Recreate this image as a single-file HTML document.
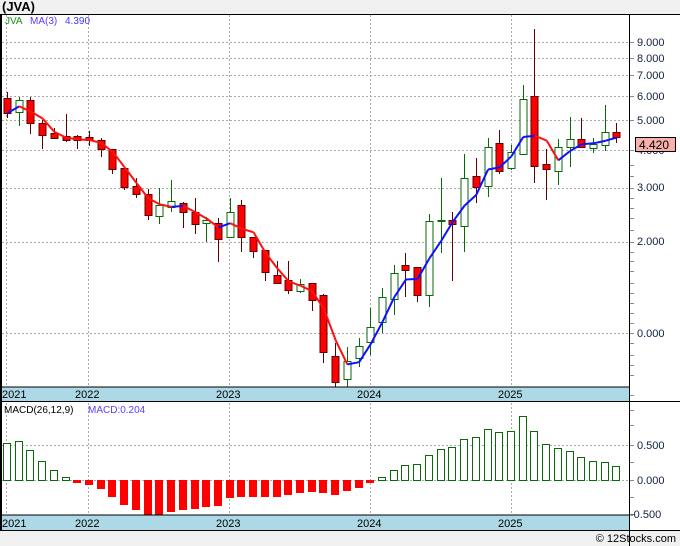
<!DOCTYPE html>
<html><head><meta charset="utf-8"><style>
html,body{margin:0;padding:0;background:#f0f0f0;}
body{width:680px;height:546px;overflow:hidden;position:relative;font-family:"Liberation Sans",sans-serif;}
svg{position:absolute;left:0;top:0;}
</style></head><body>
<svg id="s" width="680" height="546" xmlns="http://www.w3.org/2000/svg" font-family="Liberation Sans, sans-serif">
<rect x="0" y="14" width="680" height="516" fill="#fff"/>
<text x="2" y="11" font-size="13" font-weight="bold" fill="#000">(JVA)</text>
<g id="g"></g>
<rect x="1" y="387" width="628" height="14" fill="#add8e6"/>
<rect x="1" y="515" width="628" height="15" fill="#add8e6"/>
<g font-size="11" fill="#000">
<text x="2" y="398">2021</text><text x="75" y="398">2022</text><text x="216" y="398">2023</text><text x="357" y="398">2024</text><text x="498" y="398">2025</text>
<text x="2" y="527">2021</text><text x="75" y="527">2022</text><text x="216" y="527">2023</text><text x="357" y="527">2024</text><text x="498" y="527">2025</text>
</g>
<line x1="0" y1="14.5" x2="680" y2="14.5" stroke="#000"/>
<line x1="1" y1="14" x2="1" y2="530" stroke="#000" stroke-width="2"/>
<line x1="629.5" y1="14" x2="629.5" y2="546" stroke="#000"/>
<line x1="0" y1="387" x2="629" y2="387" stroke="#000"/>
<line x1="0" y1="401.5" x2="680" y2="401.5" stroke="#000"/>
<line x1="0" y1="515" x2="629" y2="515" stroke="#000"/>
<line x1="0" y1="530.5" x2="680" y2="530.5" stroke="#000"/>
<g font-size="10">
<text x="5" y="24" fill="#1a8a1a">JVA</text><text x="30" y="24" fill="#5a3cff">MA(3)</text><text x="65" y="24" fill="#3a3aff">4.390</text>
<text x="4" y="413" fill="#000">MACD(26,12,9)</text><text x="88" y="413" fill="#5a3cff">MACD:0.204</text>
</g>
<g font-size="11" fill="#102040">
<text x="637" y="46">9.000</text><text x="637" y="62">8.000</text><text x="637" y="79">7.000</text><text x="637" y="100">6.000</text><text x="637" y="124">5.000</text><text x="637" y="154">4.000</text><text x="637" y="191">3.000</text><text x="637" y="245">2.000</text><text x="637" y="337">0.000</text>
<text x="637" y="449">0.500</text><text x="637" y="484">0.000</text><text x="630" y="518">-0.500</text>
</g>
<rect x="635.5" y="137.5" width="40" height="14" fill="#f7b0ae" stroke="#000"/>
<text x="639" y="149" font-size="12" fill="#000">4.420</text>
<text x="676" y="542" font-size="11" fill="#000" text-anchor="end">© 12Stocks.com</text>
</svg>
<script>
var g=document.getElementById('g'),NS='http://www.w3.org/2000/svg';
function el(t,a){var e=document.createElementNS(NS,t);for(var k in a)e.setAttribute(k,a[k]);g.appendChild(e);return e;}
// grid
[42,58,75,96,120,150,188,242,333,445,480].forEach(function(y){el('line',{x1:2,y1:y+.5,x2:629,y2:y+.5,stroke:'#aaa','stroke-dasharray':'2,2'});});
[6,88,229,370,511].forEach(function(x){el('line',{x1:x+.5,y1:15,x2:x+.5,y2:515,stroke:'#aaa','stroke-dasharray':'2,2'});});
// right ticks
[42,58,75,96,120,150,165,176,188,198,208,218,230,242,252,261,271,283,293,303,313,323,333,343,355,365,375,395,410,425,445,462,480,497,514].forEach(function(y){el('line',{x1:629,y1:y+.5,x2:634,y2:y+.5,stroke:'#888'});});
// candles: [green?1:0, bodyTop, bodyBot, high, low]
var C=[[0,98,113,92,118],[1,100,112,97,126],[0,100,123,97,134],[0,123,135,120,149],[0,133,138,128,138],[0,136,140,114,142],[0,136,140,135,149],[0,137,140,131,146],[0,140,149,138,157],[0,149,169,149,174],[0,168,187,168,190],[0,186,194,178,198],[0,194,215,189,220],[1,205,216,188,224],[1,201,207,180,212],[0,203,212,202,228],[0,212,224,198,234],[1,220,223,217,242],[0,223,239,218,262],[1,212,237,198,238],[0,205,237,200,252],[0,237,251,237,258],[0,250,272,250,281],[0,275,283,261,283],[0,280,290,261,294],[1,284,291,279,293],[0,283,300,283,311],[0,295,352,294,363],[0,356,382,343,387],[1,361,379,347,387],[1,346,358,338,367],[1,327,342,308,355],[1,297,322,288,333],[1,273,299,265,315],[0,265,270,253,297],[0,267,295,267,302],[1,221,295,214,307],[1,220,221,178,253],[0,220,224,212,281],[1,178,226,154,252],[0,176,187,158,203],[1,147,186,138,197],[0,143,171,130,174],[1,152,168,145,170],[1,99,154,85,154],[0,96,166,29,183],[0,164,169,149,200],[1,147,171,139,185],[1,139,147,117,167],[0,139,147,118,147],[1,144,148,138,153],[1,132,145,105,151],[0,132,137,123,143]];
var M=[443,441,450,461,470,477,483,485,489,497,505,510,515,515,512,510,509,507,506,498,497,497,497,497,495,493,492,493,495,491,488,483,477,470,465,464,455,449,447,439,437,429,432,431,416,431,444,448,451,457,461,462,466];
function X(j){return 7+11.72*j;}
// MACD
M.forEach(function(y,j){var x=Math.round(X(j))-4;if(y<480)el('rect',{x:x+.5,y:y+.5,width:7,height:480-y,fill:'#fff',stroke:'#0a6a0a'});else el('rect',{x:x,y:480,width:8,height:Math.min(y,515)-480,fill:'#f00'});});
// candles
C.forEach(function(c,j){var x=Math.round(X(j));var col=c[0]?'#0a6a0a':'#600000';
el('line',{x1:x+.5,y1:c[3],x2:x+.5,y2:c[4],stroke:col});
var h=Math.max(1,c[2]-c[1]);
el('rect',{x:x-3,y:c[1]+.5,width:7,height:h,fill:c[0]?'#fff':'#f00',stroke:col});});
// MA(3)
function P(y){return Math.pow(10,(333-y)/305);}function Y(p){return 333-305*Math.log(p)/Math.LN10;}
var cl=C.map(function(c){return P(c[0]?c[1]:c[2]);});var ma=[];
for(var j=0;j<cl.length;j++){var a=cl.slice(Math.max(0,j-2),j+1);ma.push(Y(a.reduce(function(s,v){return s+v;},0)/a.length));}
for(var j=1;j<ma.length;j++){el('line',{x1:X(j-1)+.5,y1:ma[j-1],x2:X(j)+.5,y2:ma[j],stroke:ma[j]<ma[j-1]?'#1010ff':'#ff1010','stroke-width':2});}
</script>
</body></html>
